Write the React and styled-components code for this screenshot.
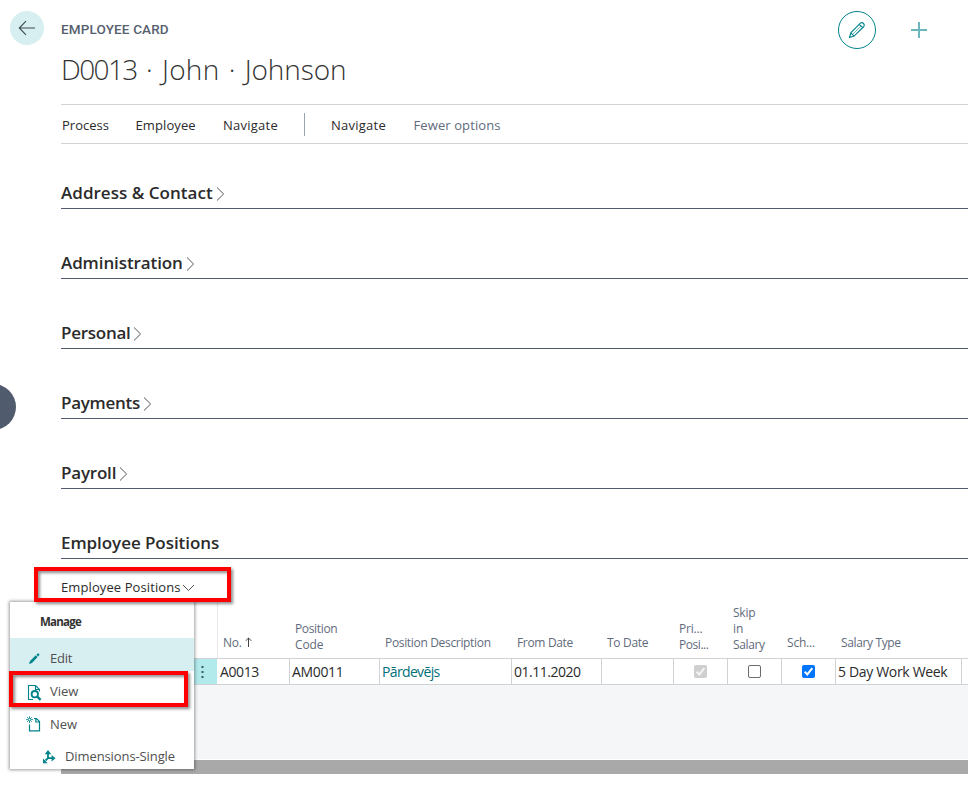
import React from 'react';
import styled, { createGlobalStyle } from 'styled-components';

const Global = createGlobalStyle`
  * { box-sizing: border-box; }
  html, body { margin: 0; background: #fff; overflow: hidden; }
  body { font-family: "Open Sans", "Noto Sans", sans-serif; color: #2b2b2b; }
  svg { display: block; flex: none; }
`;

const Page = styled.div`
  position: relative;
  width: 968px;
  height: 787px;
  overflow: hidden;
  background: #fff;
  padding-left: 61px;
`;

const Text = styled.span`
  white-space: nowrap;
  letter-spacing: ${(p) => p.$ls || 0}px;
`;

const Header = styled.header`
  display: flex;
  height: 104px;
  margin-left: -51px;
  padding-top: 11px;
`;

const BackButton = styled.button`
  width: 34px;
  height: 34px;
  padding: 0;
  border: 0;
  border-radius: 50%;
  background: #d8eff1;
  display: grid;
  place-items: center;
`;

const Titles = styled.div`
  flex: 1;
  padding: 8px 0 0 17px;
`;

const Caption = styled.div`
  font: 500 13.5px/20px Roboto, sans-serif;
  color: #56616f;
`;

const Title = styled.h1`
  margin: 8px 0 0;
  font-weight: 300;
  font-size: 28px;
  line-height: 44px;
  white-space: nowrap;
  word-spacing: 2px;
  color: #333;
`;

const Actions = styled.div`
  display: flex;
  width: 130px;
  height: 38px;
  align-items: center;
  gap: 34px;
`;

const EditButton = styled.button`
  width: 38px;
  height: 38px;
  padding: 0;
  border: 1px solid #00838a;
  border-radius: 50%;
  background: #fff;
  display: grid;
  place-items: center;
`;

const ActionBar = styled.nav`
  display: flex;
  align-items: center;
  height: 40px;
  border-top: 1px solid #d0d2d6;
  border-bottom: 1px solid #d0d2d6;
  font-size: 13px;
  padding: 1px 0 0 1px;
`;

const Action = styled.a`
  width: ${(p) => p.$w}px;
  white-space: nowrap;
  letter-spacing: ${(p) => p.$ls || 0}px;
  color: ${(p) => (p.$muted ? '#5f6b7c' : '#2b2b2b')};
`;

const Divider = styled.span`
  width: 1px;
  height: 23px;
  margin: -1px 26px 0 0;
  background: #9aa3b0;
`;

const Section = styled.section`
  display: flex;
  align-items: flex-end;
  height: ${(p) => p.$h || 70}px;
  padding-bottom: 3px;
  border-bottom: 1px solid #505c6d;
`;

const SectionTitle = styled.h2`
  margin: 0;
  font-size: 17px;
  font-weight: 600;
  line-height: 24px;
  white-space: nowrap;
  letter-spacing: ${(p) => p.$ls || 0}px;
`;

const SectionChevron = styled.svg`
  margin: 0 0 3px 3px;
`;

const PartBar = styled.div`
  display: flex;
  align-items: center;
  gap: 1px;
  height: 43px;
  padding-top: 12px;
  font-size: 13px;
`;

const PartChevron = styled.svg`
  margin-top: 2px;
`;

const Grid = styled.div`
  width: 960px;
`;

const columns = '156px 72px 90px 132px 90px 72px 54px 54px 54px 126px 60px';

const HeadRow = styled.div`
  display: grid;
  grid-template-columns: ${columns};
  align-items: end;
  height: 57px;
  border-bottom: 1px solid #d0d2d6;
`;

const HeadCell = styled.div`
  display: flex;
  flex-direction: column;
  justify-content: flex-end;
  height: 56px;
  padding: 0 0 ${(p) => (p.$tall ? 5 : 7)}px ${(p) => (p.$edge ? 5 : 6)}px;
  font-size: 12px;
  line-height: 16px;
  color: #5f6b7c;
  white-space: nowrap;
  border-left: ${(p) => (p.$edge ? '1px solid #e6e8ea' : '0')};
`;

const SortHead = styled.div`
  display: flex;
  align-items: center;
  gap: 3px;
`;

const SortArrow = styled.svg`
  margin-bottom: 2px;
`;

const BodyRow = styled.div`
  display: grid;
  grid-template-columns: ${columns};
  height: 26px;
  border-bottom: 1px solid #d0d2d6;
`;

const Cell = styled.div`
  display: flex;
  align-items: center;
  justify-content: ${(p) => (p.$center ? 'center' : 'flex-start')};
  padding-left: ${(p) => (p.$center ? 0 : p.$first ? 3 : 2)}px;
  border-left: ${(p) => (p.$first ? '0' : '1px solid #d0d2d6')};
  font-size: 14px;
  color: ${(p) => (p.$link ? '#007079' : '#2b2b2b')};
`;

const Selector = styled.div`
  display: flex;
  align-items: center;
  justify-content: flex-end;
  padding-right: 13px;
  background: #b2e9eb;
`;

const EmptyArea = styled.div`
  height: 75px;
  background: #f5f6f8;
  border-bottom: 1px solid #fff;
`;

const Scrollbar = styled.div`
  height: 14px;
  background: #a9a9a9;
`;

const Check = styled.span`
  width: 13px;
  height: 13px;
  border-radius: 2px;
  display: grid;
  place-items: center;
  border: ${(p) => (p.$kind === 'empty' ? '1px solid #6b6b6b' : '0')};
  background: ${(p) => ({ empty: '#fff', on: '#0075ff', disabled: '#cfcfcf' })[p.$kind]};
`;

const SideHandle = styled.div`
  position: absolute;
  left: -30px;
  top: 384px;
  width: 46px;
  height: 46px;
  border-radius: 50%;
  background: #505c6d;
`;

const Menu = styled.div`
  position: absolute;
  left: 10px;
  top: 602px;
  width: 184px;
  height: 167px;
  background: #fff;
  box-shadow: 0 0 3px 1px rgba(0, 0, 0, 0.38);
  font-size: 13px;
  color: #505050;
`;

const MenuTitle = styled.div`
  height: 36px;
  padding: 10px 0 0 30px;
  font-size: 11.5px;
  font-weight: 700;
  line-height: 20px;
  color: #333;
`;

const MenuItem = styled.div`
  display: flex;
  align-items: center;
  height: ${(p) => p.$h || 33}px;
  padding: ${(p) => p.$pt || 7}px 0 0 ${(p) => p.$indent || 16}px;
  gap: 8px;
  background: ${(p) => (p.$active ? '#d8eff1' : 'transparent')};
`;

const ViewIcon = styled.svg`
  margin-top: 2px;
`;

const Highlight = styled.div`
  position: absolute;
  left: ${(p) => p.$x}px;
  top: ${(p) => p.$y}px;
  width: ${(p) => p.$w}px;
  height: ${(p) => p.$h}px;
  border: 4px solid #fe0000;
  filter: drop-shadow(2px 2px 1.5px rgba(0, 0, 0, 0.45));
`;

const Chevron = () => (
  <SectionChevron width="9" height="16" viewBox="0 0 9 16">
    <path d="M1 1.5 L7.6 8 L1 14.5" fill="none" stroke="#555" strokeWidth="1" />
  </SectionChevron>
);

const Tick = ({ color }) => (
  <svg width="13" height="13" viewBox="0 0 13 13">
    <path d="M2.7 6.8 L5.3 9.4 L10.3 3.2" fill="none" stroke={color} strokeWidth="2" />
  </svg>
);

const sections = [
  { title: 'Address & Contact', ls: 0.03, h: 65 },
  { title: 'Administration', ls: -0.1 },
  { title: 'Personal', ls: -0.27 },
  { title: 'Payments', ls: -0.27 },
  { title: 'Payroll', ls: -0.2 },
];

export default function App() {
  return (
    <>
      <Global />
      <Page>
        <Header>
          <BackButton aria-label="Back">
            <svg width="18" height="16" viewBox="0 0 18 16">
              <path d="M17 8 H1.5 M8 1.2 L1.3 8 L8 14.8" fill="none" stroke="#3c4a4c" strokeWidth="1.1" />
            </svg>
          </BackButton>
          <Titles>
            <Caption><Text $ls={0.15}>EMPLOYEE CARD</Text></Caption>
            <Title><Text $ls={-1.6}>D0013</Text> · <Text $ls={0.3}>John</Text> · <Text $ls={-0.1}>Johnson</Text></Title>
          </Titles>
          <Actions>
            <EditButton aria-label="Edit">
              <svg width="18" height="18" viewBox="0 0 18 18">
                <path d="M1.5 16.5 L2.8 11.9 L12.4 2.2 Q13.9 0.9 15.5 2.5 Q17.1 4.1 15.8 5.5 L6.1 15.1 Z M11.3 3.4 L14.6 6.7 M2.8 11.9 L6.1 15.1" fill="none" stroke="#00838a" strokeWidth="1.1" />
                <path d="M4.5 13.4 L13 4.9" stroke="#00838a" strokeWidth="0.6" />
              </svg>
            </EditButton>
            <svg width="18" height="18" viewBox="0 0 18 18">
              <path d="M9 1 V17 M1 9 H17" stroke="#6bb8bc" strokeWidth="2" />
            </svg>
          </Actions>
        </Header>

        <ActionBar>
          <Action $w={73.5}>Process</Action>
          <Action $w={87.5} $ls={0.1}>Employee</Action>
          <Action $w={81} $ls={0.25}>Navigate</Action>
          <Divider />
          <Action $w={82.5} $ls={0.25}>Navigate</Action>
          <Action $w={90} $ls={0.1} $muted>Fewer options</Action>
        </ActionBar>

        {sections.map((s) => (
          <Section key={s.title} $h={s.h}>
            <SectionTitle $ls={s.ls}>{s.title}</SectionTitle>
            <Chevron />
          </Section>
        ))}
        <Section>
          <SectionTitle $ls={-0.06}>Employee Positions</SectionTitle>
        </Section>

        <PartBar>
          <Text $ls={0.1}>Employee Positions</Text>
          <PartChevron width="13" height="8" viewBox="0 0 13 8">
            <path d="M1 1 L6.5 6.5 L12 1" fill="none" stroke="#555" strokeWidth="1" />
          </PartChevron>
        </PartBar>

        <Grid>
          <HeadRow>
            <span />
            <HeadCell $edge>
              <SortHead>
                <Text $ls={-0.2}>No.</Text>
                <SortArrow width="7" height="10" viewBox="0 0 7 10">
                  <path d="M3.5 10 V1 M0.7 3.8 L3.5 1 L6.3 3.8" fill="none" stroke="#444" strokeWidth="1" />
                </SortArrow>
              </SortHead>
            </HeadCell>
            <HeadCell $tall><Text $ls={-0.35}>Position</Text><Text $ls={-0.1}>Code</Text></HeadCell>
            <HeadCell><Text $ls={-0.33}>Position Description</Text></HeadCell>
            <HeadCell><Text $ls={-0.33}>From Date</Text></HeadCell>
            <HeadCell><Text $ls={-0.3}>To Date</Text></HeadCell>
            <HeadCell $tall><Text $ls={-0.2}>Pri...</Text><Text $ls={-0.45}>Posi...</Text></HeadCell>
            <HeadCell $tall><Text $ls={-0.25}>Skip</Text><Text>in</Text><Text $ls={-0.35}>Salary</Text></HeadCell>
            <HeadCell><Text $ls={-0.2}>Sch...</Text></HeadCell>
            <HeadCell><Text $ls={-0.37}>Salary Type</Text></HeadCell>
          </HeadRow>
          <BodyRow>
            <Selector>
              <svg width="3" height="14" viewBox="0 0 3 14">
                <path d="M0.5 1 h2 v2 h-2 z M0.5 6 h2 v2 h-2 z M0.5 11 h2 v2 h-2 z" fill="#3a5a5c" />
              </svg>
            </Selector>
            <Cell $first><Text $ls={-0.4}>A0013</Text></Cell>
            <Cell><Text $ls={-0.35}>AM0011</Text></Cell>
            <Cell $link><Text $ls={-0.65}>Pārdevējs</Text></Cell>
            <Cell><Text $ls={-0.5}>01.11.2020</Text></Cell>
            <Cell />
            <Cell $center><Check $kind="disabled"><Tick color="#f4f4f4" /></Check></Cell>
            <Cell $center><Check $kind="empty" /></Cell>
            <Cell $center><Check $kind="on"><Tick color="#fff" /></Check></Cell>
            <Cell><Text $ls={-0.33}>5 Day Work Week</Text></Cell>
            <Cell />
          </BodyRow>
          <EmptyArea />
          <Scrollbar />
        </Grid>

        <SideHandle />

        <Menu>
          <MenuTitle><Text $ls={-0.75}>Manage</Text></MenuTitle>
          <MenuItem $active>
            <svg width="16" height="15" viewBox="0 0 16 15">
              <path d="M3 13 L4 9.9 L9.8 4.3 L11.6 6.1 L6 11.9 Z M10.4 3.7 L11.6 2.6 Q12.4 2.1 13.1 2.8 Q13.7 3.5 13.2 4.3 L12.2 5.5 Z" fill="#00838a" />
            </svg>
            <Text $ls={-0.2}>Edit</Text>
          </MenuItem>
          <MenuItem>
            <ViewIcon width="16" height="17" viewBox="0 0 16 17">
              <path d="M7 15.5 H2.5 V1.5 H9.5 L13.5 5.5 V7.5 M9.5 1.5 V5.5 H13.5" fill="none" stroke="#00838a" strokeWidth="1.1" />
              <circle cx="8.8" cy="10.2" r="3.2" fill="none" stroke="#00838a" strokeWidth="1.8" />
              <path d="M11 12.4 L14.6 15.8" stroke="#00838a" strokeWidth="2.4" />
            </ViewIcon>
            <Text>View</Text>
          </MenuItem>
          <MenuItem>
            <svg width="16" height="16" viewBox="0 0 16 16">
              <path d="M3.5 8.5 V14.8 H13.5 V5.5 L10.5 2.5 H8 M9.8 2.5 V6 H13.5" fill="none" stroke="#00838a" strokeWidth="1.2" />
              <path d="M3.5 0.3 V7 M0.2 3.6 H6.8 M1.2 1.3 L5.8 5.9 M5.8 1.3 L1.2 5.9" stroke="#00838a" strokeWidth="0.9" />
              <circle cx="3.5" cy="3.6" r="0.9" fill="#fff" />
            </svg>
            <Text>New</Text>
          </MenuItem>
          <MenuItem $indent={31} $pt={5}>
            <svg width="16" height="15" viewBox="0 0 16 15">
              <path d="M7 9.2 V4 M7 9.2 H11 M7 9.2 L4.5 11.5" stroke="#00838a" strokeWidth="1.8" />
              <path d="M7 1 L10.3 5.2 H3.7 Z M14.5 9.2 L10.6 5.9 V12.5 Z M2 14.2 V9.5 L6.7 14.2 Z" fill="#00838a" />
            </svg>
            <Text $ls={-0.1}>Dimensions-Single</Text>
          </MenuItem>
        </Menu>

        <Highlight $x={34} $y={567} $w={197} $h={35} />
        <Highlight $x={9} $y={671} $w={179} $h={36} />
      </Page>
    </>
  );
}
